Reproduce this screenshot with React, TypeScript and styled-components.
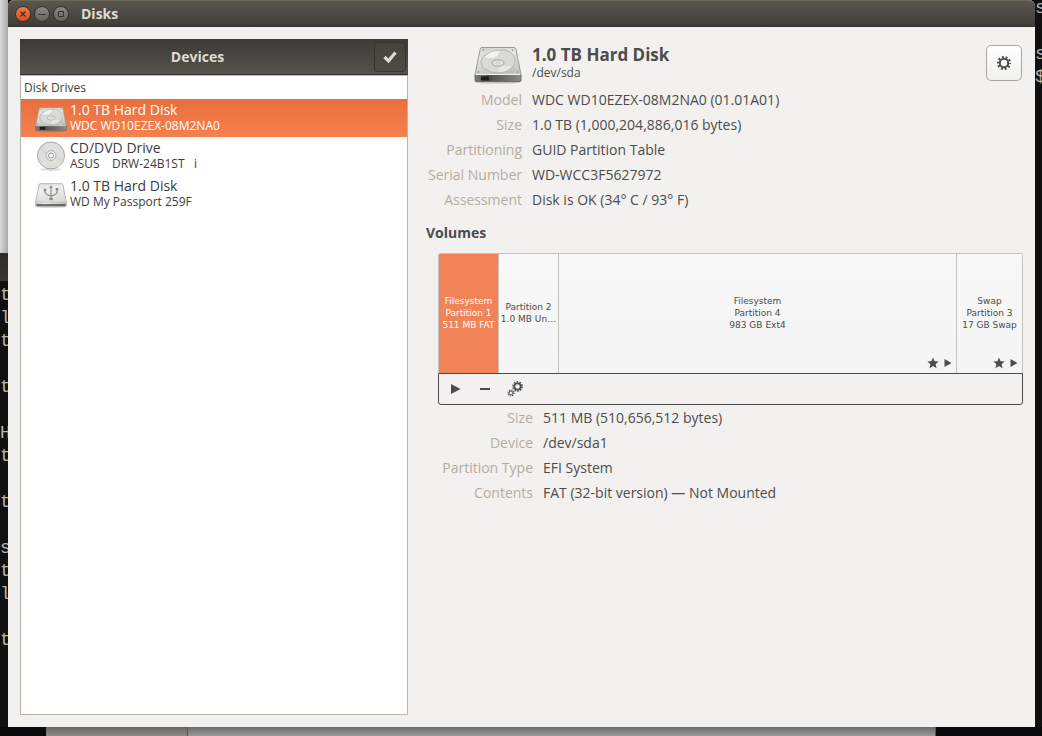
import React from "react";
import styled, { createGlobalStyle, css } from "styled-components";

const GlobalStyle = createGlobalStyle`
  *, *::before, *::after { box-sizing: border-box; }
  body { margin: 0; background: #0a0a0c; }
  button { font: inherit; padding: 0; margin: 0; border: 0; background: none; cursor: pointer; }
  h1, h2, p, dl, dt, dd, ul { margin: 0; padding: 0; }
  svg { display: block; }
`;

const Desktop = styled.div`
  display: grid;
  grid-template-columns: 8px minmax(0, 1fr) 7px;
  grid-template-rows: 1fr 9px;
  min-height: 100vh;
  font-family: "Open Sans", "Noto Sans", sans-serif;
  font-size: 14px;
  line-height: 25px;
  color: #4c4c4c;
`;

const Behind = styled.div`
  overflow: hidden;
  display: flex;
  flex-direction: column;
  background: #101010;
`;

const PaleWindow = styled.div`
  flex: 0 0 253px;
  background: linear-gradient(to right, #d9d9d9, #a8a8a8);
`;

const PaleWindowBar = styled.div`
  flex: 0 0 28px;
  background: linear-gradient(#2b2b29, #3a3936);
`;

const Terminal = styled.pre<{ $top: number }>`
  margin: ${(p) => p.$top}px 0 0;
  font-family: "Liberation Mono", monospace;
  font-size: 18px;
  line-height: 23px;
  color: #b4b4b4;
`;

const Below = styled.div`
  grid-column: 1 / -1;
  display: grid;
  grid-template-columns: 46px 142px 1fr 106px;
  background: #0a0a0c;
`;

const BelowPart = styled.div<{ $from: string; $to: string }>`
  background: linear-gradient(${(p) => p.$from}, ${(p) => p.$to});
  border-right: 1px solid #55534f;
`;

const Window = styled.main`
  display: flex;
  flex-direction: column;
  background: #f2f1ef;
  border-radius: 6px 6px 0 0;
`;

const TitleBar = styled.header`
  display: flex;
  align-items: center;
  gap: 3px;
  height: 27px;
  padding: 0 8px 0 7px;
  border-top: 1px solid #6b6859;
  border-bottom: 1px solid #33322e;
  border-radius: 6px 6px 0 0;
  background: linear-gradient(#5a574d, #3e3d38);
`;

const WindowButton = styled.button<{ $close?: boolean }>`
  width: 16px;
  height: 16px;
  border-radius: 50%;
  border: 1px solid #35342f;
  color: #33322d;
  background: ${(p) => (p.$close ? "linear-gradient(#f4794f, #de4d1e)" : "linear-gradient(#8b8981, #65635c)")};
`;

const Title = styled.h1`
  margin-left: 9px;
  font-size: 14px;
  line-height: 20px;
  color: #dfdbd2;
`;

const Body = styled.div`
  flex: 1;
  display: grid;
  grid-template-columns: minmax(0, 388fr) minmax(0, 597fr);
  gap: 18px;
  padding: 12px;
`;

const Sidebar = styled.nav`
  display: flex;
  flex-direction: column;
`;

const SidebarHead = styled.div`
  display: grid;
  grid-template-columns: 1fr 32px;
  align-items: center;
  height: 36px;
  padding-right: 2px;
  background: linear-gradient(#3c3b37, #55524b);
  border-bottom: 1px solid #35342f;
`;

const SidebarTitle = styled.h2`
  padding-left: 1px;
  font-size: 14px;
  text-align: center;
  color: #dfdbd2;
`;

const CheckButton = styled.button`
  display: grid;
  place-items: center;
  height: 30px;
  border: 1px solid #35342f;
  border-radius: 4px;
  background: linear-gradient(#44423d, #4e4c46);
  color: #dfdbd2;
`;

const DeviceList = styled.div`
  flex: 1;
  border: 1px solid #b8b5ae;
  background: #fff;
`;

const GroupLabel = styled.p`
  padding-left: 3px;
  font-size: 12px;
  line-height: 23px;
  color: #3c3c3c;
`;

const Device = styled.button<{ $selected?: boolean }>`
  display: flex;
  align-items: center;
  gap: 3px;
  width: 100%;
  height: 38px;
  padding-left: 14px;
  text-align: left;
  color: #3c3c3c;
  ${(p) =>
    p.$selected &&
    css`
      color: #fff;
      background: linear-gradient(#e96f3c, #f58150);
    `}
`;

const DeviceIcon = styled.span`
  padding-top: 2px;
`;

const Stack = styled.span`
  display: flex;
  flex-direction: column;
`;

const DeviceName = styled.span`
  line-height: 16px;
`;

const DeviceModel = styled.span`
  font-size: 12px;
  line-height: 16px;
  white-space: pre;
`;

const Detail = styled.section`
  display: flex;
  flex-direction: column;
`;

const DetailHead = styled.header`
  display: grid;
  grid-template-columns: 96px 1fr 36px;
  column-gap: 10px;
  align-items: center;
  height: 48px;
  padding-right: 1px;
`;

const HeadIcon = styled.div`
  justify-self: end;
  padding-top: 3px;
`;

const HeadText = styled(Stack)`
  padding-bottom: 3px;
`;

const DriveName = styled.h2`
  font-size: 17px;
  line-height: 22px;
`;

const DrivePath = styled.span`
  font-size: 12px;
  line-height: 14px;
`;

const GearButton = styled.button`
  display: grid;
  place-items: center;
  height: 36px;
  border: 1px solid #a9a6a0;
  border-radius: 5px;
  background: linear-gradient(#ffffff, #f0f0ef);
  color: #4c4c4c;
`;

const Facts = styled.dl<{ $label: number }>`
  display: grid;
  grid-template-columns: ${(p) => p.$label}px 1fr;
  column-gap: 10px;
  white-space: nowrap;
`;

const Label = styled.dt`
  text-align: right;
  color: #b5aca0;
`;

const SectionTitle = styled.h2`
  margin-top: 8px;
  font-size: 14px;
  line-height: 25px;
`;

const Volumes = styled.div`
  margin: 8px 0 0 12px;
`;

const VolumeMap = styled.div`
  display: grid;
  grid-template-columns: 59px 60px 1fr 66px;
  height: 120px;
  border: 1px solid #c4c2be;
  border-bottom: 0;
  border-radius: 3px 3px 0 0;
`;

const Volume = styled.button<{ $selected?: boolean }>`
  display: grid;
  grid-template-rows: 1fr auto 1fr;
  padding-bottom: 2px;
  min-width: 0;
  font-family: "DejaVu Sans", sans-serif;
  font-size: 9px;
  line-height: 12px;
  color: ${(p) => (p.$selected ? "#fff" : "#4c4c4c")};
  background: ${(p) => (p.$selected ? "#f08458" : "linear-gradient(#f8f8f8, #f4f4f4)")};
  & + & { border-left: 1px solid #c4c2be; }
`;

const VolumeText = styled.span`
  grid-row: 2;
  overflow: hidden;
  text-overflow: ellipsis;
  white-space: pre;
`;

const VolumeMarks = styled.span`
  grid-row: 3;
  display: flex;
  align-items: center;
  justify-content: flex-end;
  align-self: end;
  gap: 5px;
  padding: 0 4px 2px 0;
`;

const Toolbar = styled.div`
  display: flex;
  align-items: center;
  gap: 14px;
  height: 32px;
  padding-left: 8px;
  border: 1px solid #4c4c4c;
  border-radius: 0 0 3px 3px;
`;

const Tool = styled.button`
  display: grid;
  place-items: center;
  width: 16px;
  height: 16px;
  color: #4c4c4c;
`;

const VolumeFacts = styled.div`
  margin-left: 12px;
`;

function DriveIcon({ id, width, height, usb }: { id: string; width: number; height: number; usb?: boolean }) {
  return (
    <svg width={width} height={height} viewBox="0 0 48 39" aria-hidden="true">
      <defs>
        <linearGradient id={id + "t"} x1="0" y1="0" x2="0.3" y2="1">
          <stop offset="0" stopColor={usb ? "#dededc" : "#d0d0ce"} />
          <stop offset="0.4" stopColor={usb ? "#f0f0ef" : "#e6e6e4"} />
          <stop offset="1" stopColor={usb ? "#dcdcda" : "#c6c6c4"} />
        </linearGradient>
        <linearGradient id={id + "f"} x1="0" x2="1">
          <stop offset="0" stopColor={usb ? "#c4c4c2" : "#7c7e79"} />
          <stop offset="0.3" stopColor={usb ? "#e8e8e6" : "#4b4d48"} />
          <stop offset="1" stopColor={usb ? "#b8b8b6" : "#8b8d88"} />
        </linearGradient>
      </defs>
      <ellipse cx="24" cy="37" rx="23" ry="1.6" fill="#000" opacity="0.2" />
      <path d="M8 2.500h32c1 0 1.500.5 1.800 1.400L47 29.500H1L6.200 3.900C6.500 3 7 2.500 8 2.500z" fill={`url(#${id}t)`} stroke="#9a9a97" />
      <path d="M1 29.500h46v6c0 .6-.3 1-1 1H2c-.7 0-1-.4-1-1z" fill={`url(#${id}f)`} stroke={usb ? "#a0a09d" : "#6e6f6b"} />
      <path d="M1.500 29.500h45" stroke="#f4f4f3" />
      {usb ? (
        <>
          <path d="M2.500 34.500h43" stroke="#3b3b39" strokeWidth="2" />
          <g fill="none" stroke="#8a8a87" strokeWidth="1.700">
            <path d="M24 25V8M15 13v2c0 3.500 3 4.500 9 6 6-1.500 9-2.500 9-6v-3" />
          </g>
          <path d="M24 5l3 4h-6zM31 9h4v3.500h-4z" fill="#8a8a87" />
          <circle cx="15" cy="12" r="2.200" fill="#8a8a87" />
          <ellipse cx="24" cy="25.500" rx="3" ry="2" fill="#8a8a87" />
        </>
      ) : (
        <>
          <path d="M14 8.500C18 6 21 5 28 5c9 0 13 6 13 11 0 7-8 12-17 12S7 23 7 17c0-4 3-6.500 7-8.500z" fill="#d9d9d7" stroke="#b3b3b0" />
          <path d="M11 12C15 7 20 5.500 25 6c0 3-1 5-5 6.500-3 1-6 1-9-.5z" fill="#f6f6f5" opacity="0.85" />
          <path d="M38 21c-3 4-8 6-13 6l-1-6z" fill="#e9e9e8" opacity="0.7" />
          <ellipse cx="24" cy="18" rx="6" ry="3.200" fill="#e6e6e4" stroke="#a3a3a0" />
          <ellipse cx="24" cy="18" rx="3" ry="1.400" fill="#d6d6d4" />
          <path d="M33 27.500l8-1-3-5" fill="none" stroke="#bababa" />
          <path d="M7 31.500h8v4H7z" fill="#1e1e1c" />
          <g fill="#8c8c89">
            <circle cx="9.500" cy="5" r=".8" />
            <circle cx="38.500" cy="5" r=".8" />
            <circle cx="4.500" cy="27" r=".8" />
            <circle cx="43.500" cy="27" r=".8" />
          </g>
        </>
      )}
    </svg>
  );
}

function DiscIcon() {
  return (
    <svg width="32" height="32" viewBox="0 0 32 32" aria-hidden="true">
      <ellipse cx="16" cy="29.500" rx="11" ry="1.500" fill="#000" opacity=".12" />
      <circle cx="16" cy="15.500" r="13.500" fill="#dfdfde" stroke="#a5a5a3" />
      <path d="M16 16L4 11a13 13 0 0 1 4-5z" fill="#d0dce2" />
      <path d="M16 16L8 6a13 13 0 0 1 4-2z" fill="#e9e2d3" />
      <path d="M16 16l11 6a13 13 0 0 1-4 5z" fill="#e9e0d2" />
      <path d="M16 16l13 2a13 13 0 0 1-2 4z" fill="#d0dde4" />
      <circle cx="16" cy="15.500" r="5" fill="#e9e9e8" stroke="#b7b7b5" />
      <circle cx="16" cy="15.500" r="2.500" fill="#fff" stroke="#9b9b99" />
    </svg>
  );
}

function Gear({ size = 16 }: { size?: number }) {
  return (
    <svg width={size} height={size} viewBox="0 0 16 16" fill="none" stroke="currentColor" aria-hidden="true">
      <circle cx="8" cy="8" r="4.200" strokeWidth="2" />
      <circle cx="8" cy="8" r="6" strokeWidth="2.200" strokeDasharray="1.885 1.885" strokeDashoffset="0.940" />
    </svg>
  );
}

function Gears() {
  return (
    <svg width="16" height="16" viewBox="0 0 16 16" fill="none" stroke="currentColor" aria-hidden="true">
      <circle cx="10.500" cy="5.500" r="3.200" strokeWidth="1.800" />
      <circle cx="10.500" cy="5.500" r="4.600" strokeWidth="1.600" strokeDasharray="1.445 1.445" />
      <circle cx="4" cy="12" r="2" strokeWidth="1" />
      <circle cx="4" cy="12" r="3" strokeWidth="1.200" strokeDasharray="1.178 1.178" />
    </svg>
  );
}

function Marks() {
  return (
    <VolumeMarks>
      <svg width="12" height="12" viewBox="0 0 12 12" fill="#4c4c4c" aria-hidden="true">
        <path d="M6 0.500l1.600 3.700 4 .3-3 2.700 1 4L6 9l-3.600 2.200 1-4-3-2.700 4-.3z" />
      </svg>
      <svg width="8" height="12" viewBox="0 0 8 12" fill="#4c4c4c" aria-hidden="true">
        <path d="M.5 2l7 4-7 4z" />
      </svg>
    </VolumeMarks>
  );
}

const driveFacts = [
  ["Model", "WDC WD10EZEX-08M2NA0 (01.01A01)"],
  ["Size", "1.0 TB (1,000,204,886,016 bytes)"],
  ["Partitioning", "GUID Partition Table"],
  ["Serial Number", "WD-WCC3F5627972"],
  ["Assessment", "Disk is OK (34° C / 93° F)"],
];

const volumeFacts = [
  ["Size", "511 MB (510,656,512 bytes)"],
  ["Device", "/dev/sda1"],
  ["Partition Type", "EFI System"],
  ["Contents", "FAT (32-bit version) — Not Mounted"],
];

function FactList({ facts, label }: { facts: string[][]; label: number }) {
  return (
    <Facts $label={label}>
      {facts.map(([name, value]) => (
        <React.Fragment key={name}>
          <Label>{name}</Label>
          <dd>{value}</dd>
        </React.Fragment>
      ))}
    </Facts>
  );
}

export default function App() {
  return (
    <>
      <GlobalStyle />
      <Desktop>
        <Behind>
          <PaleWindow />
          <PaleWindowBar />
          <Terminal $top={3}>{"t\nl\nt\n\nt\n\nH\nt\n\nt\n\ns\nt\nl\n\nt"}</Terminal>
        </Behind>
        <Window>
          <TitleBar>
            <WindowButton $close aria-label="Close">
              <svg width="14" height="14" viewBox="0 0 14 14" stroke="currentColor" strokeWidth="1.300">
                <path d="M4.500 4.500l5 5m0-5l-5 5" />
              </svg>
            </WindowButton>
            <WindowButton aria-label="Minimize">
              <svg width="14" height="14" viewBox="0 0 14 14" stroke="currentColor">
                <path d="M3.500 7.500h7" />
              </svg>
            </WindowButton>
            <WindowButton aria-label="Maximize">
              <svg width="14" height="14" viewBox="0 0 14 14" stroke="currentColor" fill="none">
                <path d="M4.500 4.500h5v5h-5z" />
              </svg>
            </WindowButton>
            <Title>Disks</Title>
          </TitleBar>
          <Body>
            <Sidebar>
              <SidebarHead>
                <SidebarTitle>Devices</SidebarTitle>
                <CheckButton aria-label="Select devices">
                  <svg width="16" height="16" viewBox="0 0 16 16" fill="none" stroke="currentColor" strokeWidth="3.200">
                    <path d="M2.500 8l4 3.800L13.500 3.500" />
                  </svg>
                </CheckButton>
              </SidebarHead>
              <DeviceList>
                <GroupLabel>Disk Drives</GroupLabel>
                <Device $selected>
                  <DeviceIcon>
                    <DriveIcon id="a" width={32} height={26} />
                  </DeviceIcon>
                  <Stack>
                    <DeviceName>1.0 TB Hard Disk</DeviceName>
                    <DeviceModel>WDC WD10EZEX-08M2NA0</DeviceModel>
                  </Stack>
                </Device>
                <Device>
                  <DiscIcon />
                  <Stack>
                    <DeviceName>CD/DVD Drive</DeviceName>
                    <DeviceModel>{"ASUS    DRW-24B1ST   i"}</DeviceModel>
                  </Stack>
                </Device>
                <Device>
                  <DeviceIcon>
                    <DriveIcon id="b" width={32} height={26} usb />
                  </DeviceIcon>
                  <Stack>
                    <DeviceName>1.0 TB Hard Disk</DeviceName>
                    <DeviceModel>WD My Passport 259F</DeviceModel>
                  </Stack>
                </Device>
              </DeviceList>
            </Sidebar>
            <Detail>
              <DetailHead>
                <HeadIcon>
                  <DriveIcon id="c" width={48} height={39} />
                </HeadIcon>
                <HeadText>
                  <DriveName>1.0 TB Hard Disk</DriveName>
                  <DrivePath>/dev/sda</DrivePath>
                </HeadText>
                <GearButton aria-label="Drive options">
                  <Gear />
                </GearButton>
              </DetailHead>
              <FactList facts={driveFacts} label={96} />
              <SectionTitle>Volumes</SectionTitle>
              <Volumes>
                <VolumeMap>
                  <Volume $selected>
                    <VolumeText>{"Filesystem\nPartition 1\n511 MB FAT"}</VolumeText>
                  </Volume>
                  <Volume>
                    <VolumeText>{"Partition 2\n1.0 MB Un…"}</VolumeText>
                  </Volume>
                  <Volume>
                    <VolumeText>{"Filesystem\nPartition 4\n983 GB Ext4"}</VolumeText>
                    <Marks />
                  </Volume>
                  <Volume>
                    <VolumeText>{"Swap\nPartition 3\n17 GB Swap"}</VolumeText>
                    <Marks />
                  </Volume>
                </VolumeMap>
                <Toolbar>
                  <Tool aria-label="Mount">
                    <svg width="16" height="16" viewBox="0 0 16 16" fill="currentColor">
                      <path d="M4 3l9.500 5L4 13z" />
                    </svg>
                  </Tool>
                  <Tool aria-label="Delete partition">
                    <svg width="16" height="16" viewBox="0 0 16 16" fill="currentColor">
                      <path d="M3 7h10v2H3z" />
                    </svg>
                  </Tool>
                  <Tool aria-label="Partition options">
                    <Gears />
                  </Tool>
                </Toolbar>
              </Volumes>
              <VolumeFacts>
                <FactList facts={volumeFacts} label={95} />
              </VolumeFacts>
            </Detail>
          </Body>
        </Window>
        <Behind>
          <Terminal $top={-3}>{"s\n\ns\n$"}</Terminal>
        </Behind>
        <Below>
          <div />
          <BelowPart $from="#676661" $to="#8c8b88" />
          <BelowPart $from="#6c6c6c" $to="#9a9a9a" />
          <div />
        </Below>
      </Desktop>
    </>
  );
}
